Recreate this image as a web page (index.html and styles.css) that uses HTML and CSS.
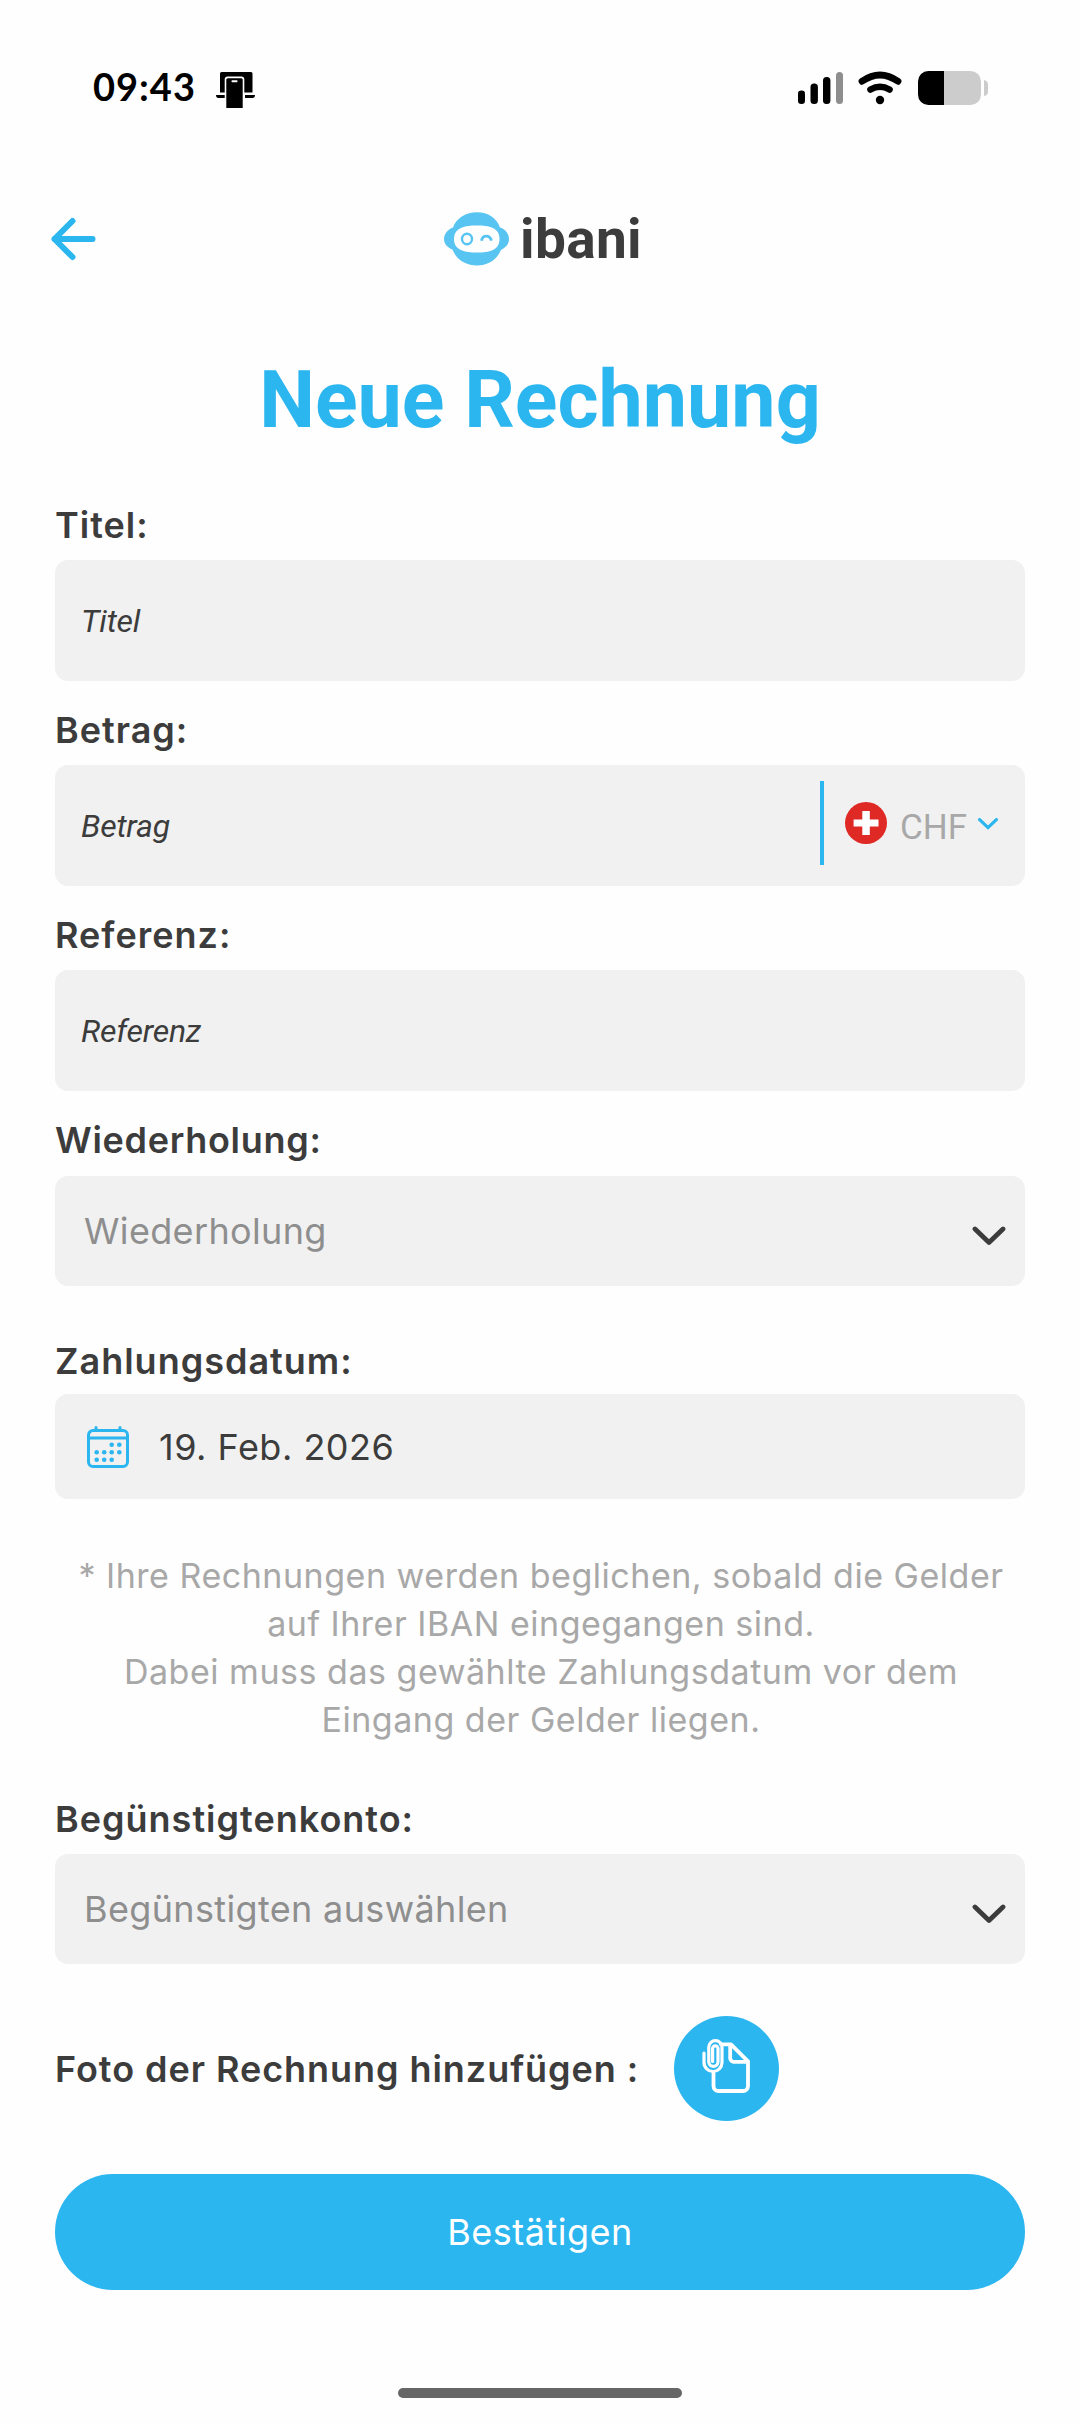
FILE: index.html
```html
<!DOCTYPE html>
<html lang="de">
<head>
    <meta charset="UTF-8">
    <meta name="viewport" content="width=device-width, initial-scale=1.0">
    <title>Neue Rechnung</title>
    <link rel="stylesheet" href="styles.css">
</head>
<body>
    <div class="status-bar">
        <span class="time">09:43</span>
        <svg class="standby" width="39" height="36" viewBox="0 0 39 36">
            <path d="M5.500 0h29.500a1.500 1.500 0 0 1 1.500 1.500v19h-32.500v-19a1.500 1.500 0 0 1 1.500-1.500z" fill="#000"/>
            <path d="M0 23h9v3H2.500Q0 26 0 23zM29 23h10q0 3-2.500 3H29z" fill="#000"/>
            <path d="M8.700 36V7.500a3 3 0 0 1 3-3h13.600a3 3 0 0 1 3 3V36z" fill="#fefefe"/>
            <path d="M10.300 36V7.700a1.500 1.500 0 0 1 1.500-1.500h13.400a1.500 1.500 0 0 1 1.500 1.500V36z" fill="#000"/>
            <rect x="15.500" y="8.300" width="6" height="2" rx="0.800" fill="#fefefe"/>
        </svg>
        <div class="status-icons">
            <svg width="46" height="34" viewBox="0 0 46 34">
                <rect x="0" y="19.500" width="7" height="13.500" rx="3.300"/>
                <rect x="12.500" y="12.500" width="7.400" height="20.500" rx="3.500"/>
                <rect x="25" y="6" width="7.400" height="27" rx="3.500"/>
                <rect x="38" y="1" width="7" height="32" rx="3.500" fill="#8e8e8e"/>
            </svg>
            <svg class="wifi" width="44" height="34" viewBox="0 0 44 34" fill="none" stroke="#000" stroke-linecap="round">
                <path d="M4 10.300Q22 -2.300 40 10.300" stroke-width="6.800"/>
                <path d="M12.500 18.500Q22 13 31.500 18.500" stroke-width="6.600"/>
                <circle cx="22" cy="29" r="4.200" fill="#000" stroke="none"/>
            </svg>
            <svg class="battery" width="71" height="34" viewBox="0 0 71 34">
                <rect width="63" height="34" rx="10.500" fill="#ccc"/>
                <path d="M26 0H10.500A10.500 10.500 0 0 0 0 10.500v13A10.500 10.500 0 0 0 10.500 34H26z"/>
                <path d="M66 9q4 1 4 4v8q0 3-4 4z" fill="#ccc"/>
            </svg>
        </div>
    </div>

    <header class="header">
        <svg class="back" width="46" height="44" viewBox="0 0 46 44" fill="none" stroke="#2bb6f0" stroke-width="6" stroke-linecap="round" stroke-linejoin="round">
            <path d="M41.500 22H3.500M21.500 4L3.500 22L21.500 40"/>
        </svg>
        <div class="logo">
            <svg width="66" height="54" viewBox="0 0 66 54">
                <path d="M33 0.300C44 0.300 52.500 6 56 15.500C61.500 17.500 65 21.500 65 27S61.500 35.500 57 38C52.500 48 44 53.500 33 53.500S12.500 48 8.500 37.500C3.500 35.500 0 32 0 27S3.500 17.500 9 15.500C12.500 6 22 0.300 33 0.300z" fill="#58c4f2"/>
                <path d="M33 13.500C45 13.500 55.500 15.500 55.500 27S45 40.500 33 40.500S10 38.500 10 27S21 13.500 33 13.500z" fill="#fefefe"/>
                <ellipse cx="23" cy="27" rx="5" ry="5.300" fill="none" stroke="#58c4f2" stroke-width="2.400"/>
                <path d="M37.500 28.700C38.500 22.500 46 22.500 47.500 28.700" fill="none" stroke="#58c4f2" stroke-width="2.800"/>
            </svg>
            <span class="logo-text">ibani</span>
        </div>
    </header>

    <main class="content">
        <h1>Neue Rechnung</h1>

        <label for="titel">Titel:</label>
        <div class="field">
            <input type="text" id="titel" placeholder="Titel">
        </div>

        <label for="betrag">Betrag:</label>
        <div class="field">
            <input type="text" id="betrag" placeholder="Betrag">
            <div class="currency">
                <svg width="42" height="42" viewBox="0 0 42 42">
                    <circle cx="21" cy="21" r="21" fill="#de2925"/>
                    <path d="M17.300 9h7.500v8.500h8.700v7h-8.700V33h-7.500v-8.500H8.600v-7h8.700z" fill="#fff"/>
                </svg>
                <span>CHF</span>
                <svg class="small-arrow" width="20" height="12" viewBox="0 0 20 12" fill="none" stroke="#2bb6f0" stroke-width="3.200" stroke-linecap="round">
                    <path d="M1.600 1.600L10 9.600L18.400 1.600"/>
                </svg>
            </div>
        </div>

        <label for="referenz">Referenz:</label>
        <div class="field">
            <input type="text" id="referenz" placeholder="Referenz">
        </div>

        <label class="label-select">Wiederholung:</label>
        <div class="select">
            <span>Wiederholung</span>
            <svg class="arrow" width="34" height="20" viewBox="0 0 34 20" fill="none" stroke="#3c3c3c" stroke-width="4.800" stroke-linecap="round" stroke-linejoin="round">
                <path d="M3 3L17 16.500L31 3"/>
            </svg>
        </div>

        <label class="label-date">Zahlungsdatum:</label>
        <div class="date">
            <svg width="42" height="42" viewBox="0 0 42 42" fill="none" stroke="#2bb6f0" stroke-width="3">
                <rect x="1.500" y="4.500" width="39" height="36" rx="4.500"/>
                <path d="M2 12h38" stroke-width="2.800"/>
                <path d="M9 4V1.500M33 4V1.500" stroke-linecap="round"/>
                <g fill="#2bb6f0" stroke="none">
                    <circle cx="24.700" cy="18.700" r="2.300"/>
                    <circle cx="32.300" cy="18.700" r="2.300"/>
                    <circle cx="9.700" cy="26.300" r="2.300"/>
                    <circle cx="17.200" cy="26.300" r="2.300"/>
                    <circle cx="24.700" cy="26.300" r="2.300"/>
                    <circle cx="32.300" cy="26.300" r="2.300"/>
                    <circle cx="9.700" cy="33.700" r="2.300"/>
                    <circle cx="17.200" cy="33.700" r="2.300"/>
                    <circle cx="24.700" cy="33.700" r="2.300"/>
                </g>
            </svg>
            <span>19. Feb. 2026</span>
        </div>

        <p class="note">
            * Ihre Rechnungen werden beglichen, sobald die Gelder<br>
            auf Ihrer IBAN eingegangen sind.<br>
            Dabei muss das gewählte Zahlungsdatum vor dem<br>
            Eingang der Gelder liegen.
        </p>

        <label>Begünstigtenkonto:</label>
        <div class="select">
            <span>Begünstigten auswählen</span>
            <svg class="arrow" width="34" height="20" viewBox="0 0 34 20" fill="none" stroke="#3c3c3c" stroke-width="4.800" stroke-linecap="round" stroke-linejoin="round">
                <path d="M3 3L17 16.500L31 3"/>
            </svg>
        </div>

        <div class="photo">
            <span>Foto der Rechnung hinzufügen :</span>
            <button class="photo-button">
                <svg width="49" height="56" viewBox="0 0 49 56" fill="none" stroke="#fff" stroke-width="3.800" stroke-linecap="round" stroke-linejoin="round">
                    <path d="M19 6.300H29L46 23.300V48a5 5 0 0 1-5 5H16.500a5 5 0 0 1-5-5V35"/>
                    <path d="M28.200 7V20.300a3.500 3.500 0 0 0 3.500 3.500H45"/>
                    <path d="M2 15V24.500a9 9 0 0 0 18 0V9.300a6.600 6.600 0 0 0-13.200 0V23.800a4.600 4.600 0 0 0 9.200 0V10.500a2.700 2.700 0 0 0-5.400 0V23.500" stroke-width="3.200"/>
                </svg>
            </button>
        </div>

        <button class="submit">Bestätigen</button>
    </main>

    <div class="home-bar"></div>
</body>
</html>
```
FILE: styles.css
```css
* {
    box-sizing: border-box;
}
body {
    margin: 0;
    height: 2424px;
    background-color: #fefefe;
    font-family: Inter, sans-serif;
    font-size: 36px;
    color: #3c3c3c;
    overflow: hidden;
}
svg {
    display: block;
    flex-shrink: 0;
}

/* Statusleiste */
.status-bar {
    display: flex;
    align-items: center;
    height: 176px;
    padding: 0 91px 0 93px;
}
.time {
    width: 123px;
    font-family: Lato, sans-serif;
    font-size: 38px;
    font-weight: 700;
    letter-spacing: 1px;
    line-height: 46px;
    color: #000;
    margin-top: -5px;
}
.standby {
    margin-top: 4px;
}
.status-icons {
    display: flex;
    align-items: center;
    margin-left: auto;
}
.wifi {
    margin-left: 14px;
}
.battery {
    margin-left: 16px;
}

/* Kopfzeile */
.header {
    display: grid;
    grid-template-columns: 1fr auto 1fr;
    align-items: center;
    height: 126px;
    padding: 0 48px 0 51px;
}
.back {
    margin-top: -1px;
}
.logo {
    display: flex;
    align-items: center;
    gap: 9px;
    padding-left: 3px;
}
.logo-text {
    font-family: Roboto, sans-serif;
    font-size: 55px;
    font-weight: 700;
    letter-spacing: 0.3px;
    line-height: 54px;
    margin-left: 1px;
}

/* Formular */
.content {
    padding: 58px 55px 0;
}
h1 {
    margin: 0 0 63px;
    font-family: Roboto, sans-serif;
    font-size: 79px;
    font-weight: 700;
    line-height: 80px;
    text-align: center;
    color: #2bb6f0;
}
label {
    display: block;
    margin-bottom: 13px;
    font-weight: 600;
    line-height: 44px;
    letter-spacing: 1px;
}
.label-select {
    margin-bottom: 14px;
    letter-spacing: 0.7px;
}
.label-date {
    margin-bottom: 11px;
}
.field {
    display: flex;
    align-items: center;
    height: 121px;
    margin-bottom: 27px;
    background-color: #f1f1f1;
    border-radius: 13px;
}
input {
    flex: 1;
    min-width: 0;
    height: 100%;
    padding: 1px 26px 0;
    border: none;
    background: none;
    font-family: Roboto, sans-serif;
    font-size: 32px;
    font-style: italic;
    letter-spacing: -0.2px;
    outline: none;
}
input::placeholder {
    color: #3c3c3c;
}
.currency {
    display: flex;
    align-items: center;
    height: 84px;
    width: 205px;
    margin-bottom: 5px;
    padding-left: 21px;
    border-left: 4px solid #2bb6f0;
    font-family: Roboto, sans-serif;
    font-size: 35px;
    color: #a8a8a8;
}
.currency span {
    margin: 8px 11px 0 13px;
}
.currency .small-arrow {
    margin-top: 1px;
}
.select {
    display: flex;
    align-items: center;
    justify-content: space-between;
    height: 110px;
    margin-bottom: 53px;
    padding: 0 19px 0 29px;
    background-color: #f1f1f1;
    border-radius: 13px;
    letter-spacing: 0.35px;
    color: #8e8e8e;
}
.arrow {
    margin-top: 9px;
}
.date {
    display: flex;
    align-items: center;
    gap: 30px;
    height: 105px;
    padding-left: 32px;
    background-color: #f1f1f1;
    border-radius: 13px;
    letter-spacing: 0.5px;
}
.note {
    margin: 53px 0;
    padding-left: 2px;
    font-size: 34px;
    line-height: 48px;
    letter-spacing: 0.52px;
    text-align: center;
    white-space: nowrap;
    color: #a8a8a8;
}
.photo {
    display: flex;
    align-items: center;
    gap: 35px;
    margin: -1px 0 53px;
    font-weight: 600;
    letter-spacing: 0.95px;
}
.photo-button {
    display: flex;
    align-items: center;
    justify-content: center;
    width: 105px;
    height: 105px;
    padding: 0 0 6px;
    border: none;
    border-radius: 50%;
    background-color: #2bb6f0;
}
.submit {
    display: block;
    width: 100%;
    height: 116px;
    border: none;
    border-radius: 58px;
    background-color: #2bb6f0;
    font-family: Inter, sans-serif;
    font-size: 36px;
    letter-spacing: 0.5px;
    color: #fff;
}
.home-bar {
    width: 284px;
    height: 10px;
    margin: 98px auto 0;
    border-radius: 5px;
    background-color: #666;
}
```
